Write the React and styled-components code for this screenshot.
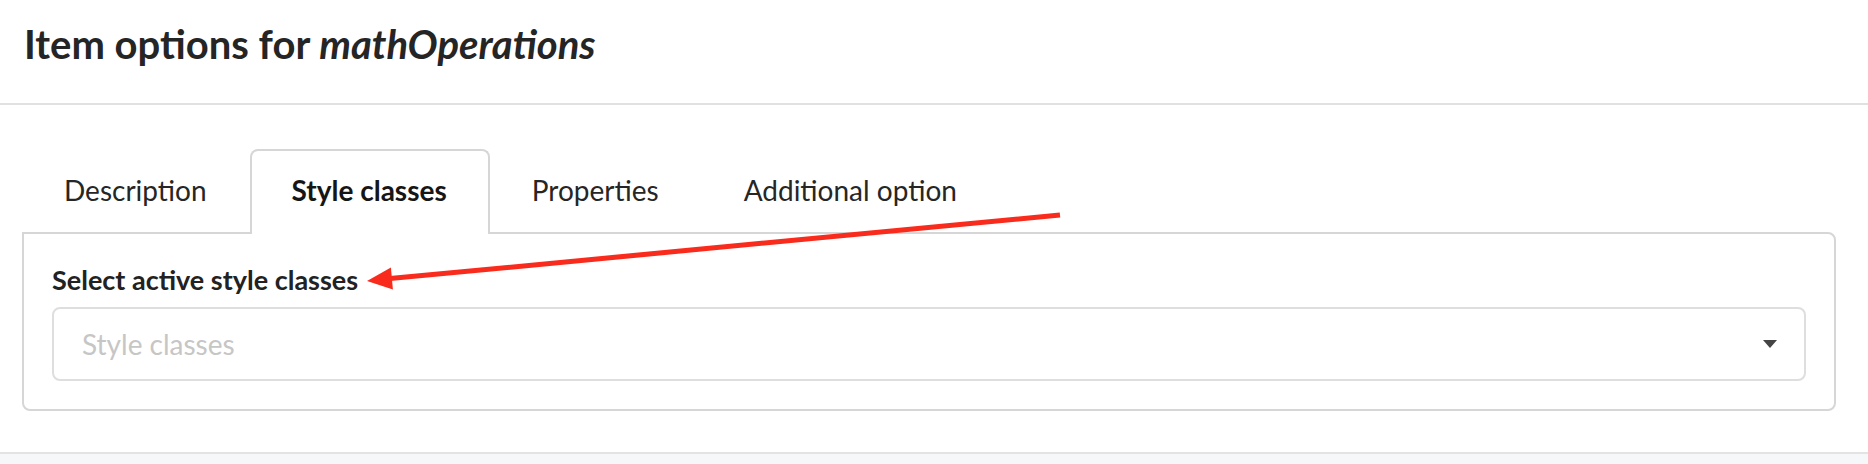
import styled, { createGlobalStyle } from 'styled-components';

const GlobalStyle = createGlobalStyle`
  html, body {
    margin: 0;
    padding: 0;
    background: #ffffff;
  }
  body {
    font-family: Lato, 'Open Sans', sans-serif;
    color: #222222;
  }
`;

const Page = styled.div`
  position: relative;
  width: 1868px;
  min-height: 464px;
  display: flex;
  flex-direction: column;
`;

const Header = styled.header`
  box-sizing: border-box;
  height: 105px;
  padding: 20px 24px 0;
  border-bottom: 2px solid #e1e1e1;
`;

const Title = styled.h1`
  margin: 0;
  font-size: 40px;
  font-weight: 700;
  line-height: normal;
  color: #252525;

  em {
    font-style: italic;
  }
`;

const Content = styled.main`
  padding: 44px 32px 0 22px;
`;

const TabList = styled.div`
  display: flex;
  align-items: flex-end;
`;

const Tab = styled.div`
  position: relative;
  z-index: 1;
  box-sizing: border-box;
  height: 85px;
  margin-bottom: -2px;
  padding: 22px 41px 0 40px;
  border: 2px solid ${(p) => (p.$active ? '#d6d6d6' : 'transparent')};
  border-bottom: none;
  border-radius: 8px 8px 0 0;
  background: ${(p) => (p.$active ? '#ffffff' : 'transparent')};
  font-size: 28px;
  font-weight: ${(p) => (p.$active ? 700 : 400)};
  line-height: normal;
  color: ${(p) => (p.$active ? '#161616' : '#262626')};
  white-space: nowrap;
`;

const Panel = styled.section`
  border: 2px solid #d6d6d6;
  border-radius: 0 8px 8px 8px;
  padding: 29px 28px 28px;
`;

const Label = styled.label`
  display: block;
  font-size: 27px;
  font-weight: 700;
  line-height: normal;
  color: #222222;
  margin-bottom: 11px;
`;

const Select = styled.div`
  box-sizing: border-box;
  height: 74px;
  display: flex;
  align-items: center;
  justify-content: space-between;
  padding: 0 27px 0 28px;
  border: 2px solid #dedede;
  border-radius: 8px;
  background: #ffffff;
`;

const Placeholder = styled.span`
  font-size: 28px;
  line-height: normal;
  color: #c6c6c6;
`;

const Caret = styled.span`
  width: 0;
  height: 0;
  border-left: 7px solid transparent;
  border-right: 7px solid transparent;
  border-top: 8px solid #444444;
`;

const Footer = styled.footer`
  flex: 1;
  margin-top: 41px;
  min-height: 10px;
  border-top: 2px solid #e3e3e3;
  background: #f6f7f9;
`;

const Annotation = styled.svg`
  position: absolute;
  left: 0;
  top: 0;
  pointer-events: none;
`;

const tabs = ['Description', 'Style classes', 'Properties', 'Additional option'];

export default function App() {
  const active = 'Style classes';
  return (
    <Page>
      <GlobalStyle />
      <Header>
        <Title>
          Item options for <em>mathOperations</em>
        </Title>
      </Header>

      <Content>
        <TabList>
          {tabs.map((t) => (
            <Tab key={t} $active={t === active}>
              {t}
            </Tab>
          ))}
        </TabList>
        <Panel>
          <Label>Select active style classes</Label>
          <Select>
            <Placeholder>Style classes</Placeholder>
            <Caret />
          </Select>
        </Panel>
      </Content>

      <Footer />

      {/* red annotation arrow */}
      <Annotation width="1868" height="464" viewBox="0 0 1868 464">
        <line x1="1060" y1="215" x2="390" y2="278.6" stroke="#f92b1d" strokeWidth="5" />
        <polygon points="367,281 392.9,289.6 390.9,267.6" fill="#f92b1d" />
      </Annotation>
    </Page>
  );
}
